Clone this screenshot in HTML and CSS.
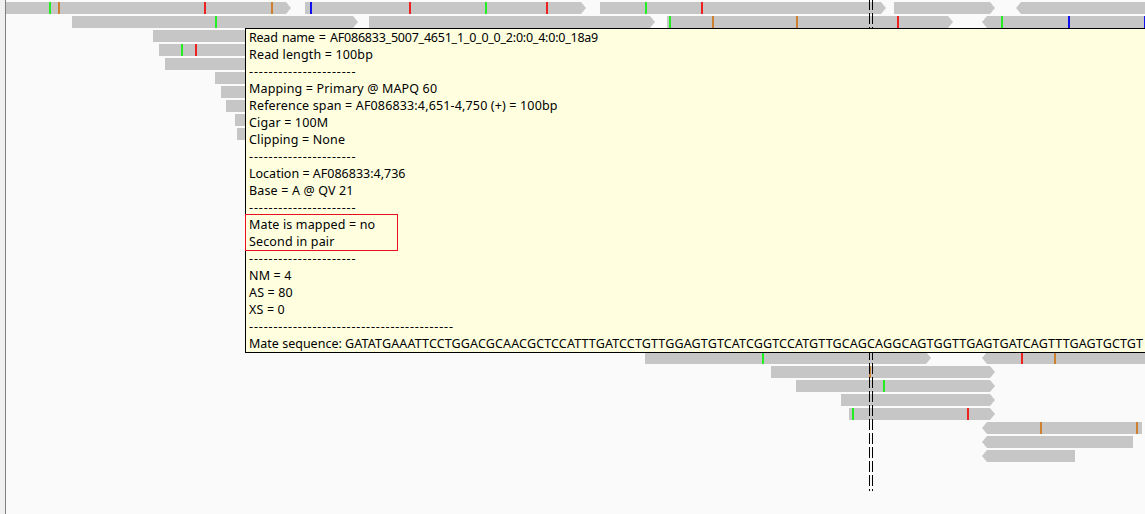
FILE: index.html
```html
<!DOCTYPE html>
<html lang="en">
<head>
    <meta charset="UTF-8">
    <title>Read pileup</title>
    <link rel="stylesheet" href="styles.css">
</head>
<body>
    <div class="track">
        <svg class="pileup" width="1139" height="514" viewBox="6 0 1139 514">
            <g class="reads">
                <!-- row 0 -->
                <polygon points="6,2 286,2 291,8 286,14 6,14"/>
                <polygon points="305,2 581,2 586,8 581,14 305,14"/>
                <polygon points="600,2 881,2 886,8 881,14 600,14"/>
                <polygon points="894,2 990,2 995,8 990,14 894,14"/>
                <polygon points="1016,8 1021,2 1145,2 1145,14 1021,14"/>
                <!-- row 1 -->
                <polygon points="72,16 353,16 358,22 353,28 72,28"/>
                <polygon points="369,16 650,16 655,22 650,28 369,28"/>
                <polygon points="667,16 948,16 953,22 948,28 667,28"/>
                <polygon points="982,22 987,16 1145,16 1145,28 987,28"/>
                <!-- rows under the popup -->
                <rect x="153" y="30" width="200" height="12"/>
                <rect x="159" y="44" width="200" height="12"/>
                <rect x="165" y="58" width="200" height="12"/>
                <rect x="215" y="72" width="100" height="12"/>
                <rect x="221" y="86" width="100" height="12"/>
                <rect x="226" y="100" width="100" height="12"/>
                <rect x="235" y="114" width="100" height="12"/>
                <rect x="237" y="128" width="100" height="12"/>
                <!-- rows below the popup -->
                <polygon points="645,352 926,352 931,358 926,364 645,364"/>
                <polygon points="982,358 987,352 1145,352 1145,364 987,364"/>
                <polygon points="771,366 990,366 995,372 990,378 771,378"/>
                <polygon points="796,380 990,380 995,386 990,392 796,392"/>
                <polygon points="841,394 990,394 995,400 990,406 841,406"/>
                <polygon points="849,408 990,408 995,414 990,420 849,420"/>
                <polygon points="982,428 987,422 1142,422 1142,434 987,434"/>
                <polygon points="982,442 987,436 1133,436 1133,448 987,448"/>
                <polygon points="982,456 987,450 1075,450 1075,462 987,462"/>
            </g>
            <g class="green">
                <rect x="49" y="2" width="2" height="12"/>
                <rect x="645" y="2" width="2" height="12"/>
                <rect x="485" y="2" width="2" height="12"/>
                <rect x="215" y="16" width="2" height="12"/>
                <rect x="669" y="16" width="2" height="12"/>
                <rect x="1001" y="16" width="2" height="12"/>
                <rect x="181" y="44" width="2" height="12"/>
                <rect x="762" y="352" width="2" height="12"/>
                <rect x="883" y="380" width="2" height="12"/>
                <rect x="852" y="408" width="2" height="12"/>
            </g>
            <g class="orange">
                <rect x="58" y="2" width="2" height="12"/>
                <rect x="271" y="2" width="2" height="12"/>
                <rect x="712" y="16" width="2" height="12"/>
                <rect x="796" y="16" width="2" height="12"/>
                <rect x="1054" y="352" width="2" height="12"/>
                <rect x="869" y="366" width="2" height="12"/>
                <rect x="1040" y="422" width="2" height="12"/>
                <rect x="1136" y="422" width="2" height="12"/>
            </g>
            <g class="red">
                <rect x="204" y="2" width="2" height="12"/>
                <rect x="409" y="2" width="2" height="12"/>
                <rect x="546" y="2" width="2" height="12"/>
                <rect x="701" y="2" width="2" height="12"/>
                <rect x="897" y="16" width="2" height="12"/>
                <rect x="195" y="44" width="2" height="12"/>
                <rect x="1021" y="352" width="2" height="12"/>
                <rect x="967" y="408" width="2" height="12"/>
            </g>
            <g class="blue">
                <rect x="310" y="2" width="2" height="12"/>
                <rect x="1068" y="16" width="2" height="12"/>
                <rect x="1144" y="16" width="1" height="12"/>
            </g>
            <g class="center-line">
                <line x1="869.5" y1="-1" x2="869.5" y2="491"/>
                <line x1="872.5" y1="-1" x2="872.5" y2="491"/>
            </g>
        </svg>
        <div class="popup">
            <div class="read-name">Read name = AF086833_5007_4651_1_0_0_0_2:0:0_4:0:0_18a9</div>
            <div>Read length = 100bp</div>
            <div class="rule">----------------------</div>
            <div>Mapping = Primary @ MAPQ 60</div>
            <div>Reference span = AF086833:4,651-4,750 (+) = 100bp</div>
            <div>Cigar = 100M</div>
            <div>Clipping = None</div>
            <div class="rule">----------------------</div>
            <div class="location">Location = AF086833:4,736</div>
            <div>Base = A @ QV 21</div>
            <div class="rule">----------------------</div>
            <div class="marked">
                <div>Mate is mapped = no</div>
                <div>Second in pair</div>
            </div>
            <div class="rule">----------------------</div>
            <div>NM = 4</div>
            <div>AS = 80</div>
            <div>XS = 0</div>
            <div class="rule">------------------------------------------</div>
            <div class="location">Mate sequence: <span class="sequence">GATATGAAATTCCTGGACGCAACGCTCCATTTGATCCTGTTGGAGTGTCATCGGTCCATGTTGCAGCAGGCAGTGGTTGAGTGATCAGTTTGAGTGCTGT</span></div>
        </div>
    </div>
</body>
</html>
```

FILE: styles.css
```css
html, body {
    margin: 0;
    padding: 0;
    background: #f0f0f0;
    overflow: hidden;
}
.track {
    position: relative;
    width: 1139px;
    height: 514px;
    margin-left: 6px;
    background: #fafafa;
    box-shadow: -1px 0 0 #808080;
    overflow: hidden;
}
.pileup {
    display: block;
}
.reads {
    fill: #c6c6c6;
}
.green {
    fill: #22ee22;
}
.orange {
    fill: #cc8030;
}
.red {
    fill: #ee2020;
}
.blue {
    fill: #1010ee;
}
.center-line line {
    stroke: #000000;
    stroke-width: 1;
    stroke-dasharray: 11 3;
}
.popup {
    position: absolute;
    left: 239px;
    top: 28px;
    width: 960px;
    height: 325px;
    box-sizing: border-box;
    padding: 0 3px;
    border: 1px solid #000000;
    background: #ffffe0;
    color: #000000;
    font-family: "Noto Sans", sans-serif;
    font-size: 12.5px;
    letter-spacing: 0.15px;
    line-height: 17px;
    white-space: nowrap;
}
.read-name {
    letter-spacing: -0.23px;
    word-spacing: 1.3px;
}
.location {
    letter-spacing: 0;
}
.sequence {
    letter-spacing: 0.15px;
}
.rule {
    letter-spacing: 0.85px;
}
.marked {
    position: relative;
}
.marked::before {
    content: "";
    position: absolute;
    left: -4px;
    top: -2px;
    width: 151px;
    height: 35px;
    border: 1px solid #e81020;
}
```
